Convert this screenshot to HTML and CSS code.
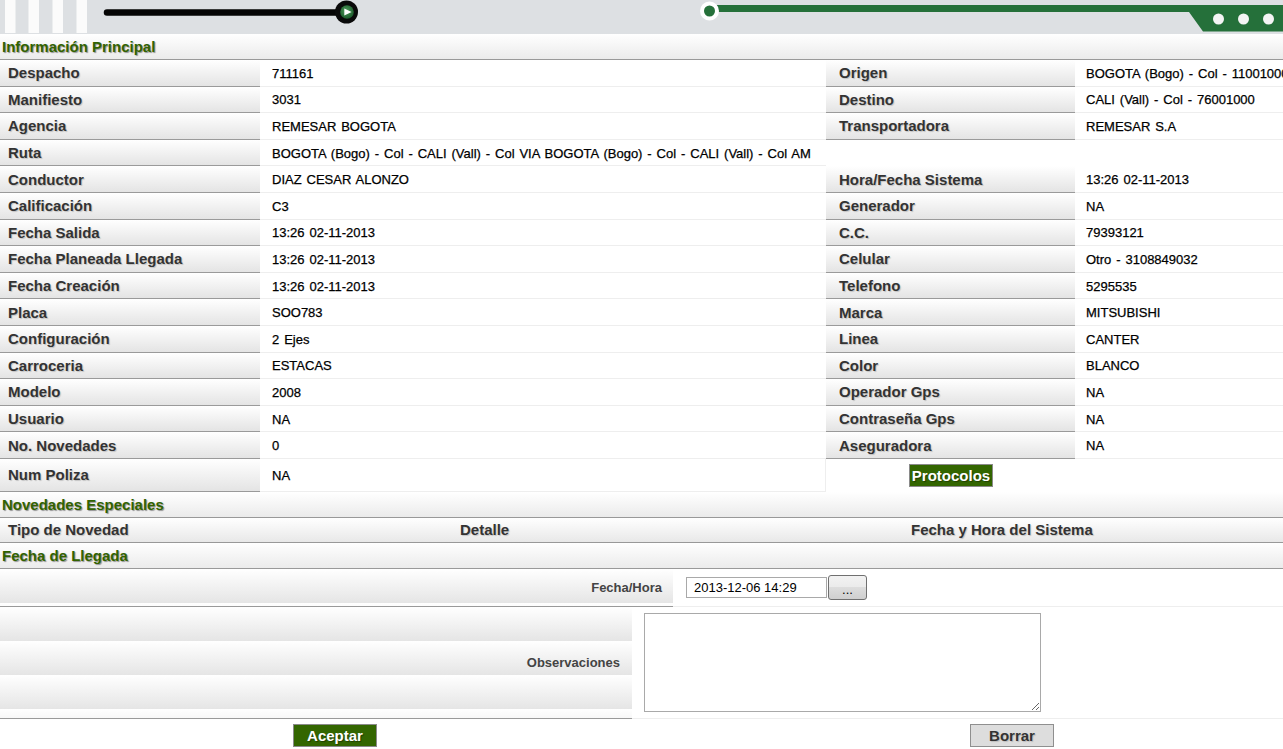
FILE: index.html
```html
<!DOCTYPE html>
<html lang="es">
<head>
<meta charset="utf-8">
<title>Despacho 711161</title>
<link rel="stylesheet" href="styles.css">
</head>
<body>
<header class="banner">
  <svg width="1283" height="34" viewBox="0 0 1283 34" aria-hidden="true">
    <defs>
      <radialGradient id="play" cx="45%" cy="40%" r="60%">
        <stop offset="0" stop-color="#4f9a5c"/>
        <stop offset="1" stop-color="#1d5c2c"/>
      </radialGradient>
    </defs>
    <rect x="0" y="0" width="1283" height="34" fill="#dde0e3"/>
    <rect x="5" y="0" width="10.5" height="33" fill="#fbfbfb"/>
    <rect x="28.5" y="0" width="10.5" height="33" fill="#fbfbfb"/>
    <rect x="52.5" y="0" width="10.5" height="33" fill="#fbfbfb"/>
    <rect x="76.5" y="0" width="10.5" height="33" fill="#fbfbfb"/>
    <line x1="107" y1="12.5" x2="340" y2="12.5" stroke="#050505" stroke-width="6.5" stroke-linecap="round"/>
    <circle cx="346.5" cy="12" r="11.5" fill="#0a0a0a"/>
    <circle cx="347" cy="12" r="6.8" fill="url(#play)"/>
    <polygon points="344.3,8.6 351.6,12 344.3,15.4" fill="#ffffff"/>
    <polygon points="710,5 1283,5 1283,31.5 1203,31.5 1189,12 710,12" fill="#25703a"/>
    <circle cx="709.5" cy="11" r="7.5" fill="#25703a" stroke="#ffffff" stroke-width="4"/>
    <circle cx="1218.5" cy="19" r="5.5" fill="#f4f4f4"/>
    <circle cx="1243.5" cy="19" r="5.5" fill="#f4f4f4"/>
    <circle cx="1268.5" cy="19" r="5.5" fill="#f4f4f4"/>
  </svg>
</header>

<main class="page">
  <h2 class="sec-title">Información Principal</h2>
  <div class="info">
    <div class="lbl">Despacho</div><div class="val">711161</div>
    <div class="lbl lbl2">Origen</div><div class="val val2">BOGOTA (Bogo) - Col - 11001000</div>

    <div class="lbl">Manifiesto</div><div class="val">3031</div>
    <div class="lbl lbl2">Destino</div><div class="val val2">CALI (Vall) - Col - 76001000</div>

    <div class="lbl">Agencia</div><div class="val">REMESAR BOGOTA</div>
    <div class="lbl lbl2">Transportadora</div><div class="val val2">REMESAR S.A</div>

    <div class="lbl">Ruta</div><div class="val">BOGOTA (Bogo) - Col - CALI (Vall) - Col VIA BOGOTA (Bogo) - Col - CALI (Vall) - Col AM</div>
    <div class="blank span2"></div>

    <div class="lbl">Conductor</div><div class="val">DIAZ CESAR ALONZO</div>
    <div class="lbl lbl2">Hora/Fecha Sistema</div><div class="val val2">13:26 02-11-2013</div>

    <div class="lbl">Calificación</div><div class="val">C3</div>
    <div class="lbl lbl2">Generador</div><div class="val val2">NA</div>

    <div class="lbl">Fecha Salida</div><div class="val">13:26 02-11-2013</div>
    <div class="lbl lbl2">C.C.</div><div class="val val2">79393121</div>

    <div class="lbl">Fecha Planeada Llegada</div><div class="val">13:26 02-11-2013</div>
    <div class="lbl lbl2">Celular</div><div class="val val2">Otro - 3108849032</div>

    <div class="lbl">Fecha Creación</div><div class="val">13:26 02-11-2013</div>
    <div class="lbl lbl2">Telefono</div><div class="val val2">5295535</div>

    <div class="lbl">Placa</div><div class="val">SOO783</div>
    <div class="lbl lbl2">Marca</div><div class="val val2">MITSUBISHI</div>

    <div class="lbl">Configuración</div><div class="val">2 Ejes</div>
    <div class="lbl lbl2">Linea</div><div class="val val2">CANTER</div>

    <div class="lbl">Carroceria</div><div class="val">ESTACAS</div>
    <div class="lbl lbl2">Color</div><div class="val val2">BLANCO</div>

    <div class="lbl">Modelo</div><div class="val">2008</div>
    <div class="lbl lbl2">Operador Gps</div><div class="val val2">NA</div>

    <div class="lbl">Usuario</div><div class="val">NA</div>
    <div class="lbl lbl2">Contraseña Gps</div><div class="val val2">NA</div>

    <div class="lbl">No. Novedades</div><div class="val">0</div>
    <div class="lbl lbl2">Aseguradora</div><div class="val val2">NA</div>

    <div class="lbl">Num Poliza</div><div class="val val-last">NA</div>
    <div class="blank center"><button type="button" class="btn btn-green">Protocolos</button></div>
    <div class="blank"></div>
  </div>

  <h2 class="sec-title">Novedades Especiales</h2>
  <div class="nov-head">
    <div class="nh nh1">Tipo de Novedad</div>
    <div class="nh nh2">Detalle</div>
    <div class="nh nh3">Fecha y Hora del Sistema</div>
  </div>

  <h2 class="sec-title">Fecha de Llegada</h2>
  <div class="frow frow-fecha">
    <div class="flabel">Fecha/Hora</div>
    <div class="fval">
      <input type="text" class="date-input" value="2013-12-06 14:29">
      <button type="button" class="dots-btn">...</button>
    </div>
  </div>
  <div class="frow frow-obs">
    <div class="flabel">Observaciones</div>
    <div class="fval">
      <textarea class="obs-area"></textarea>
    </div>
  </div>
  <div class="actions">
    <div class="act act-left"><button type="button" class="btn btn-green">Aceptar</button></div>
    <div class="act act-right"><button type="button" class="btn btn-grey">Borrar</button></div>
  </div>
</main>
</body>
</html>
```

FILE: styles.css
```css
html, body {
  margin: 0;
  padding: 0;
  background: #ffffff;
  overflow: hidden;
}

body {
  font-family: "Liberation Sans", Arial, sans-serif;
  font-size: 13px;
  color: #111;
  width: 1283px;
}

.banner svg {
  display: block;
}

.page {
  display: flex;
  flex-direction: column;
}

.sec-title {
  margin: 0;
  box-sizing: border-box;
  height: 26px;
  padding-left: 2px;
  display: flex;
  align-items: center;
  font-size: 15px;
  font-weight: bold;
  color: #316200;
  text-shadow: 1px 1px 1px rgba(0, 0, 0, 0.4);
  background: linear-gradient(#ffffff, #ebebeb);
  border-bottom: 1px solid #999;
}

/* main info grid */
.info {
  display: grid;
  grid-template-columns: 260px 566px 249px 208px;
  grid-template-rows: repeat(15, 26.6px) 33px;
}

.lbl, .val, .blank {
  box-sizing: border-box;
  display: flex;
  align-items: center;
  white-space: nowrap;
  overflow: hidden;
}

.lbl {
  padding-left: 8px;
  font-size: 15px;
  font-weight: bold;
  color: #333;
  text-shadow: 1px 1px 1px rgba(0, 0, 0, 0.18);
  background: linear-gradient(#ffffff, #e4e4e4);
  border-bottom: 1px solid #9a9a9a;
}

.lbl2 {
  padding-left: 13px;
}

.val {
  padding: 1px 0 0 12px;
  background: #fff;
  border-bottom: 1px solid #eeeeee;
  color: #000;
  word-spacing: 1.3px;
  -webkit-text-stroke: 0.25px #000;
}

.val2 {
  padding-left: 11px;
}

.val-last {
  border-right: 1px solid #eeeeee;
}

.blank {
  background: #fff;
}

.span2 {
  grid-column: span 2;
}

.center {
  justify-content: center;
  padding-left: 1px;
}

/* buttons */
.btn {
  box-sizing: border-box;
  width: 84px;
  height: 23px;
  margin: 0;
  padding: 0;
  font-family: "Liberation Sans", Arial, sans-serif;
  font-size: 15px;
  font-weight: bold;
  cursor: pointer;
}

.btn-green {
  background: #336600;
  color: #ffffff;
  border: 1px solid #8a8a8a;
  text-shadow: 1px 1px 1px rgba(0, 0, 0, 0.4);
}

.btn-grey {
  background: #dddddd;
  color: #333;
  border: 1px solid #8f8f8f;
  text-shadow: 1px 1px 1px rgba(0, 0, 0, 0.15);
}

/* novedades header */
.nov-head {
  display: grid;
  grid-template-columns: 452px 451px 1fr;
  box-sizing: border-box;
  height: 25px;
  background: linear-gradient(#ffffff, #e8e8e8);
  border-bottom: 1px solid #999;
}

.nh {
  display: flex;
  align-items: center;
  padding-left: 8px;
  font-size: 15px;
  font-weight: bold;
  color: #333;
  text-shadow: 1px 1px 1px rgba(0, 0, 0, 0.18);
}

/* fecha de llegada form */
.frow {
  display: grid;
  box-sizing: border-box;
}

.frow-fecha {
  grid-template-columns: 673px 1fr;
  height: 38px;
}

.frow-obs {
  grid-template-columns: 632px 1fr;
  height: 112px;
}

.flabel {
  box-sizing: border-box;
  display: flex;
  align-items: center;
  justify-content: flex-end;
  padding-right: 11px;
  font-size: 13px;
  font-weight: bold;
  color: #444;
  background: linear-gradient(#ffffff, #e5e5e5) 0 0 / 100% 34px repeat-y;
  border-bottom: 1px solid #9a9a9a;
}

.frow-obs .flabel {
  padding-right: 12px;
}

.fval {
  box-sizing: border-box;
  display: flex;
  align-items: center;
  border-bottom: 1px solid #eeeeee;
  padding-left: 13px;
}

.frow-obs .fval {
  padding-left: 12px;
}

.date-input {
  box-sizing: border-box;
  width: 141px;
  height: 21px;
  margin: 0 1px 0 0;
  padding: 0 0 0 7px;
  border: 1px solid #a9a9a9;
  font-family: "Liberation Sans", Arial, sans-serif;
  font-size: 13px;
  color: #000;
  background: #fff;
}

.dots-btn {
  box-sizing: border-box;
  width: 39px;
  height: 25px;
  margin: 0;
  padding: 4px 0 0;
  border: 1px solid #707070;
  border-radius: 3px;
  background: linear-gradient(#f2f2f2 0%, #ebebeb 50%, #dddddd 50%, #cfcfcf 100%);
  font-family: "Liberation Sans", Arial, sans-serif;
  font-size: 13px;
  color: #000;
  line-height: 1;
}

.obs-area {
  box-sizing: border-box;
  width: 397px;
  height: 99px;
  margin: 0;
  padding: 2px;
  border: 1px solid #a9a9a9;
  font-family: "Liberation Sans", Arial, sans-serif;
  font-size: 13px;
  resize: both;
}

/* action buttons */
.actions {
  display: grid;
  grid-template-columns: 670px 1fr;
  height: 30px;
  box-sizing: border-box;
  padding-top: 5px;
}

.act-left {
  display: flex;
  justify-content: center;
}

.act-right {
  display: flex;
  padding-left: 300px;
}
```
